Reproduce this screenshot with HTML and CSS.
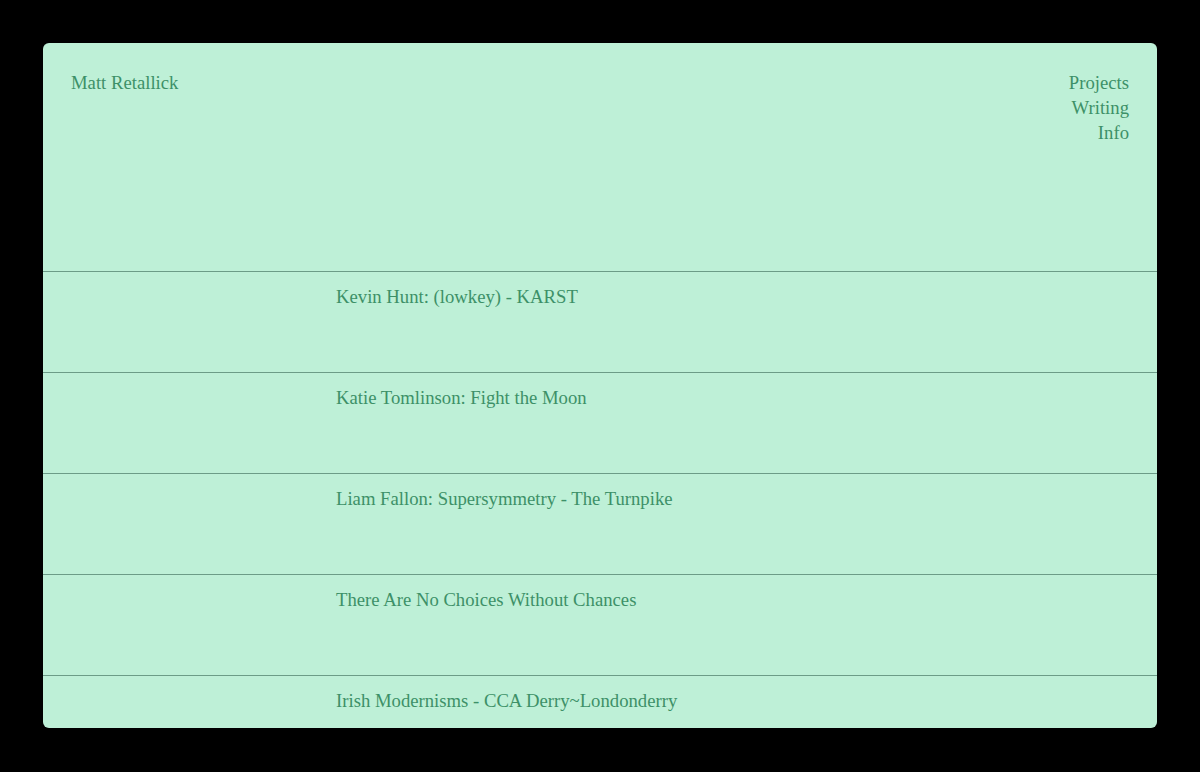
FILE: index.html
```html
<!DOCTYPE html>
<html lang="en">
<head>
<meta charset="utf-8">
<title>Matt Retallick</title>
<link rel="stylesheet" href="styles.css">
</head>
<body>
<div class="panel">
  <header class="header">
    <a class="name" href="#">Matt Retallick</a>
    <nav class="nav">
      <a href="#">Projects</a>
      <a href="#">Writing</a>
      <a href="#">Info</a>
    </nav>
  </header>
  <ul class="list">
    <li class="row"><a href="#">Kevin Hunt: (lowkey) - KARST</a></li>
    <li class="row"><a href="#">Katie Tomlinson: Fight the Moon</a></li>
    <li class="row"><a href="#">Liam Fallon: Supersymmetry - The Turnpike</a></li>
    <li class="row"><a href="#">There Are No Choices Without Chances</a></li>
    <li class="row"><a href="#">Irish Modernisms - CCA Derry~Londonderry</a></li>
  </ul>
</div>
</body>
</html>
```
FILE: styles.css
```css
html, body {
  margin: 0;
  padding: 0;
  background: #000;
  height: 100%;
}
body {
  padding: 43px;
  box-sizing: border-box;
  font-family: "Liberation Serif", serif;
  font-size: 18.7px;
  line-height: 25px;
  color: #3d9068;
}
a {
  color: inherit;
  text-decoration: none;
}
.panel {
  background: #bef0d7;
  border-radius: 6px;
  height: 685px;
  overflow: hidden;
}
.header {
  display: flex;
  justify-content: space-between;
  align-items: flex-start;
  padding: 27px 28px 0 28px;
  height: 201px;
  border-bottom: 1px solid #6c9c87;
}
.nav {
  display: flex;
  flex-direction: column;
  align-items: flex-end;
}
.list {
  list-style: none;
  margin: 0;
  padding: 0;
}
.row {
  height: 100px;
  box-sizing: content-box;
  border-bottom: 1px solid #6c9c87;
  padding: 0 0 0 293px;
  display: flex;
  align-items: flex-start;
}
.row a {
  padding-top: 12px;
}
```
